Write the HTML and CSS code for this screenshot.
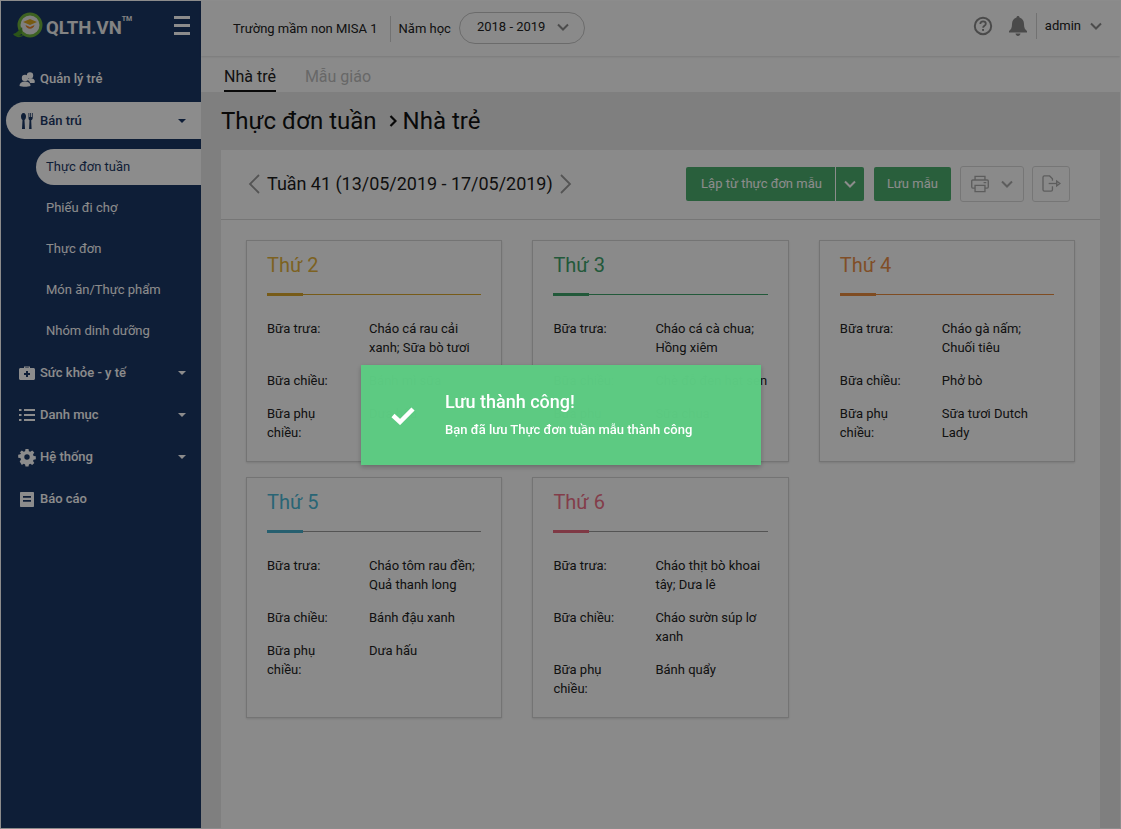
FILE: index.html
```html
<!DOCTYPE html>
<html lang="vi">
<head>
<meta charset="utf-8">
<title>Thực đơn tuần</title>
<link rel="stylesheet" href="styles.css">
</head>
<body>
<div class="app">
  <aside class="sidebar">
    <div class="brand">
      <svg class="logo" viewBox="0 0 32 28" width="32" height="28">
        <circle cx="18" cy="13" r="11" fill="#e8e8e8" stroke="#6fb23d" stroke-width="3"/>
        <path d="M11 10l7-3 7 3-7 3z" fill="#d9a520"/>
        <path d="M13.500 13c1 5 8 5 9 0l-4.500 2z" fill="#e2812c"/>
        <path d="M1 22c4-1 6-4 9-7 1 4 0 9-5 9 3 0 5-1 7-1-3 3-8 3-11-1z" fill="#4f9a2e"/>
      </svg>
      <span class="brand-name">QLTH.VN</span><span class="tm">TM</span>
      <div class="burger"><i></i><i></i><i></i></div>
    </div>
    <nav class="nav">
      <a class="nav-item">
        <svg class="nav-icon" viewBox="0 0 16 16"><circle cx="11" cy="4.500" r="3.200"/><path d="M8 9c1-2 5-2.500 6.500-1S16 10 15.500 12H11c0-1-1-2.500-3-3z"/><circle cx="6" cy="7" r="3.200"/><path d="M0.500 15c0-3 2-4.500 5.500-4.500s5.500 1.500 5.500 4.500c-3 1-8 1-11 0z"/></svg>
        <span>Quản lý trẻ</span>
      </a>
      <a class="nav-item active">
        <svg class="nav-icon" viewBox="0 0 16 16"><path d="M4.500 0c1.800 0 2.500 2 2.500 3.500S6.300 6.500 5.500 7l.5 9H3l.5-9C2.700 6.500 2 5 2 3.500S2.700 0 4.500 0z"/><path d="M9.500 0h.8v4h.9V0h.8v4h.9V0h.8v5c0 1.200-.8 2-1.500 2.300l.4 8.700h-2.500l.4-8.700C10 7 9.500 6.200 9.500 5z"/></svg>
        <span>Bán trú</span><b class="caret"></b>
      </a>
      <a class="sub-item current">Thực đơn tuần</a>
      <a class="sub-item">Phiếu đi chợ</a>
      <a class="sub-item">Thực đơn</a>
      <a class="sub-item">Món ăn/Thực phẩm</a>
      <a class="sub-item">Nhóm dinh dưỡng</a>
      <a class="nav-item">
        <svg class="nav-icon" viewBox="0 0 16 16"><path fill-rule="evenodd" d="M5 3V1.500h6V3h3.500c.8 0 1.500.7 1.500 1.500v9c0 .8-.7 1.500-1.500 1.500h-13C.7 15 0 14.300 0 13.500v-9C0 3.700.7 3 1.500 3zm1.200 0h3.600v-.6H6.200zM7 6v2H5v2h2v2h2v-2h2V8H9V6z"/></svg>
        <span>Sức khỏe - y tế</span><b class="caret"></b>
      </a>
      <a class="nav-item">
        <svg class="nav-icon" viewBox="0 0 16 16"><path d="M0 2h2.500v2H0zM5 2h11v2H5zM0 7h2.500v2H0zM5 7h11v2H5zM0 12h2.500v2H0zM5 12h11v2H5z"/></svg>
        <span>Danh mục</span><b class="caret"></b>
      </a>
      <a class="nav-item">
        <svg class="nav-icon" viewBox="0 0 16 16"><path fill-rule="evenodd" d="M6.500 0h3l.4 2.200 1.400.6L13.200 1.500l2.100 2.100-1.300 1.900.6 1.400 2.200.4v3l-2.200.4-.6 1.400 1.300 1.900-2.100 2.100-1.900-1.300-1.400.6-.4 2.200h-3l-.4-2.200-1.400-.6-1.900 1.300L.7 12.400 2 10.500l-.6-1.400L-.8 8.700v-3l2.200-.4.6-1.400L.7 3.600l2.100-2.100 1.900 1.300 1.400-.6zM8 5.300a2.700 2.700 0 1 0 0 5.400 2.700 2.700 0 0 0 0-5.400z"/></svg>
        <span>Hệ thống</span><b class="caret"></b>
      </a>
      <a class="nav-item">
        <svg class="nav-icon" viewBox="0 0 16 16"><path fill-rule="evenodd" d="M2 1h12c.6 0 1 .4 1 1v13c0 .6-.4 1-1 1H2c-.6 0-1-.4-1-1V2c0-.6.4-1 1-1zm2 4v1.800h8V5zm0 4v1.800h8V9z"/></svg>
        <span>Báo cáo</span>
      </a>
    </nav>
  </aside>

  <div class="main">
    <header class="topbar">
      <span class="school">Trường mầm non MISA 1</span>
      <span class="vline"></span>
      <span class="year-label">Năm học</span>
      <div class="year-select">
        <span>2018 - 2019</span>
        <svg class="chev" viewBox="0 0 12 8" width="12" height="8"><path d="M1 1.500l5 5 5-5" fill="none" stroke="#8a8a8a" stroke-width="2"/></svg>
      </div>
      <div class="top-right">
        <svg class="help" viewBox="0 0 20 20" width="20" height="20"><circle cx="10" cy="10" r="8.200" fill="none" stroke="#888" stroke-width="2"/><path d="M7.300 8c0-1.700 1.200-2.700 2.800-2.700s2.700 1 2.700 2.400c0 2.200-2.700 2-2.700 4.100" fill="none" stroke="#888" stroke-width="1.800"/><rect x="9.100" y="13" width="1.900" height="1.900" fill="#888"/></svg>
        <svg class="bell" viewBox="0 0 18 20" width="18" height="20"><path d="M9 0c1 0 1.500.7 1.500 1.500C13.500 2.300 15 5 15 8c0 4 1 5.500 3 7v1.500H0V15c2-1.500 3-3 3-7 0-3 1.500-5.700 4.500-6.500C7.500.7 8 0 9 0zM6.500 17.500h5C11.300 19 10.300 20 9 20s-2.300-1-2.500-2.500z" fill="#888"/></svg>
        <span class="vline tall"></span>
        <span class="user">admin</span>
        <svg class="chev" viewBox="0 0 12 8" width="12" height="8"><path d="M1 1.500l5 5 5-5" fill="none" stroke="#8a8a8a" stroke-width="2"/></svg>
      </div>
    </header>

    <div class="tabs">
      <a class="tab selected">Nhà trẻ</a>
      <a class="tab">Mẫu giáo</a>
    </div>

    <div class="content">
      <h1 class="page-title">Thực đơn tuần<svg class="crumb" viewBox="0 0 8 12" width="8" height="12"><path d="M1.500 1l5 5-5 5" fill="none" stroke="#111" stroke-width="2.200"/></svg>Nhà trẻ</h1>

      <section class="panel">
        <div class="toolbar">
          <svg class="arrow" viewBox="0 0 12 20" width="12" height="20"><path d="M11 1L2 10l9 9" fill="none" stroke="#999" stroke-width="1.800"/></svg>
          <span class="week">Tuần 41 (13/05/2019 - 17/05/2019)</span>
          <svg class="arrow" viewBox="0 0 12 20" width="12" height="20"><path d="M1 1l9 9-9 9" fill="none" stroke="#999" stroke-width="1.800"/></svg>
          <div class="actions">
            <div class="btn-group">
              <button class="btn main-btn">Lập từ thực đơn mẫu</button>
              <button class="btn drop-btn"><svg viewBox="0 0 12 8" width="12" height="8"><path d="M1 1.500l5 5 5-5" fill="none" stroke="#fff" stroke-width="2"/></svg></button>
            </div>
            <button class="btn save-btn">Lưu mẫu</button>
            <button class="ghost print">
              <svg viewBox="0 0 20 19" width="18" height="18" fill="none" stroke="#aaa" stroke-width="1.500"><path d="M4.500 5V1h11v4M4.500 14H2a1.200 1.200 0 0 1-1.200-1.200V6.200A1.200 1.200 0 0 1 2 5h16a1.200 1.200 0 0 1 1.200 1.200v6.600A1.200 1.200 0 0 1 18 14h-2.500"/><path d="M4.500 11h11v7h-11zM14 8h3"/></svg>
              <svg viewBox="0 0 12 8" width="12" height="8"><path d="M1 1.500l5 5 5-5" fill="none" stroke="#aaa" stroke-width="2"/></svg>
            </button>
            <button class="ghost export">
              <svg viewBox="0 0 20 18" width="19" height="17" fill="none" stroke="#aaa" stroke-width="1.400"><path d="M11 6V4L8 1H2.500A1.500 1.500 0 0 0 1 2.500v13A1.500 1.500 0 0 0 2.500 17H9.500A1.500 1.500 0 0 0 11 15.500V12"/><path d="M7 9h9"/><path d="M15.500 6.500L19 9l-3.500 2.500z"/></svg>
            </button>
          </div>
        </div>

        <div class="cards">
          <article class="card yellow">
            <h2>Thứ 2</h2>
            <div class="rule"><i></i></div>
            <dl>
              <dt>Bữa trưa:</dt><dd>Cháo cá rau cải xanh; Sữa bò tươi</dd>
              <dt>Bữa chiều:</dt><dd>Bánh mì sữa</dd>
              <dt>Bữa phụ chiều:</dt><dd>Dưa hấu</dd>
            </dl>
          </article>
          <article class="card green">
            <h2>Thứ 3</h2>
            <div class="rule"><i></i></div>
            <dl>
              <dt>Bữa trưa:</dt><dd>Cháo cá cà chua; Hồng xiêm</dd>
              <dt>Bữa chiều:</dt><dd class="one-line">Chè đỗ đen hạt sen</dd>
              <dt>Bữa phụ chiều:</dt><dd>Sữa chua</dd>
            </dl>
          </article>
          <article class="card orange">
            <h2>Thứ 4</h2>
            <div class="rule"><i></i></div>
            <dl>
              <dt>Bữa trưa:</dt><dd>Cháo gà nấm; Chuối tiêu</dd>
              <dt>Bữa chiều:</dt><dd>Phở bò</dd>
              <dt>Bữa phụ chiều:</dt><dd>Sữa tươi Dutch Lady</dd>
            </dl>
          </article>
          <article class="card blue">
            <h2>Thứ 5</h2>
            <div class="rule"><i></i></div>
            <dl>
              <dt>Bữa trưa:</dt><dd>Cháo tôm rau đền; Quả thanh long</dd>
              <dt>Bữa chiều:</dt><dd>Bánh đậu xanh</dd>
              <dt>Bữa phụ chiều:</dt><dd>Dưa hấu</dd>
            </dl>
          </article>
          <article class="card pink">
            <h2>Thứ 6</h2>
            <div class="rule"><i></i></div>
            <dl>
              <dt>Bữa trưa:</dt><dd>Cháo thịt bò khoai tây; Dưa lê</dd>
              <dt>Bữa chiều:</dt><dd>Cháo sườn súp lơ xanh</dd>
              <dt>Bữa phụ chiều:</dt><dd>Bánh quẩy</dd>
            </dl>
          </article>
        </div>
      </section>
    </div>
  </div>
</div>

<div class="overlay"></div>

<div class="toast">
  <svg class="toast-check" viewBox="0 0 24 19" width="24" height="19"><path d="M2 9.500l7 6.500L22 3" fill="none" stroke="#fff" stroke-width="4.500"/></svg>
  <div class="toast-text">
    <div class="toast-title">Lưu thành công!</div>
    <div class="toast-msg">Bạn đã lưu Thực đơn tuần mẫu thành công</div>
  </div>
</div>
</body>
</html>
```
FILE: styles.css
```css
* { box-sizing: border-box; }
html, body { margin: 0; height: 100%; overflow: hidden; }
body { font-family: Roboto, "Noto Sans", sans-serif; font-size: 13px; color: #212121; background: #e8e8e8; }

.app { display: flex; height: 829px; border: 1px solid #fff; overflow: hidden; }

/* Sidebar */
.sidebar { width: 200px; flex: none; background: #1b3765; color: #fff; }
.brand { display: flex; align-items: center; height: 59px; padding: 0 0 10px 11px; }
.logo { flex: none; margin-right: 2px; }
.brand-name { font-size: 18.500px; font-weight: 700; color: #eee; margin-top: 4px; }
.tm { font-size: 7px; font-weight: 700; align-self: flex-start; margin-top: 14px; color: #eee; }
.burger { margin-left: auto; margin-right: 11px; width: 16px; display: flex; flex-direction: column; gap: 5.500px; }
.burger i { display: block; height: 2.500px; background: #fff; }

.nav { display: flex; flex-direction: column; gap: 5px; }
.nav-item { display: flex; align-items: center; height: 37px; margin-left: 5px; padding: 0 15px 0 13px; font-weight: 500; color: #fff; border-radius: 19px 0 0 19px; }
.nav-item.active { background: #fff; color: #1b3765; margin-bottom: 5px; }
.nav-icon { width: 16px; height: 16px; flex: none; margin-right: 5px; fill: #fff; overflow: visible; }
.active .nav-icon { fill: #1b3765; }
.caret { margin-left: auto; width: 0; height: 0; border: 4px solid transparent; border-top-color: #fff; border-bottom: 0; }
.active .caret { border-top-color: #1b3765; }

.sub-item { display: flex; align-items: center; height: 36px; margin-left: 35px; padding: 0 0 2px 10px; color: #fff; border-radius: 18px 0 0 18px; }
.sub-item.current { background: #fff; color: #1b3765; }

/* Main */
.main { flex: 1; min-width: 0; display: flex; flex-direction: column; }
.topbar { display: flex; align-items: center; height: 55px; flex: none; padding: 0 18px 0 32px; background: #fcfcfc; box-shadow: 0 1px 2px rgba(0,0,0,.12); position: relative; }
.school { margin-right: 12px; }
.vline { width: 1px; height: 26px; background: #d0d0d0; }
.year-label { margin: 0 8px; }
.year-select { display: flex; align-items: center; justify-content: space-between; width: 126px; height: 32px; margin-bottom: 2px; padding: 0 15px 2px 17px; border: 1px solid #c4c4c4; border-radius: 16px; }
.top-right { margin-left: auto; display: flex; align-items: center; padding-bottom: 6px; }
.help { margin-right: 16px; }
.bell { margin-right: 9px; }
.vline.tall { margin-right: 8px; }
.user { margin-right: 9px; }

.tabs { display: flex; height: 36px; flex: none; padding-left: 23px; gap: 29px; background: #fcfcfc; }
.tab { font-size: 16px; line-height: 42px; height: 36px; color: #bdbdbd; }
.tab.selected { color: #212121; border-bottom: 2px solid #111; }

.content { flex: 1; min-height: 0; display: flex; flex-direction: column; padding: 0 20px; background: #e8e8e8; }
.page-title { display: flex; align-items: center; height: 58px; margin: 0; font-size: 24px; font-weight: 400; color: #111; flex: none; }
.crumb { margin: 0 6px 0 12px; }

.panel { flex: 1; background: #fcfcfc; }
.toolbar { display: flex; align-items: center; height: 70px; padding: 0 30px 2px 27px; border-bottom: 1px solid #d8d8d8; }
.arrow { flex: none; }
.week { font-size: 18px; letter-spacing: -.03px; margin: 0 7px; color: #1d1d1d; }
.actions { margin-left: auto; display: flex; align-items: center; }
.btn { height: 34px; border: 0; font: 13px Roboto, sans-serif; color: #fff; background: #4cae6e; padding: 0; }
.btn-group { display: flex; margin-right: 10px; }
.main-btn { width: 150px; border-radius: 2px 0 0 2px; border-right: 1px solid #fff; padding-left: 2px; }
.drop-btn { width: 28px; border-radius: 0 2px 2px 0; display: flex; align-items: center; justify-content: center; }
.save-btn { width: 77px; border-radius: 2px; margin-right: 9px; }
.ghost { height: 36px; background: transparent; border: 1px solid #d8d8d8; border-radius: 3px; padding: 0; display: flex; align-items: center; justify-content: center; }
.print { width: 64px; gap: 12px; margin-right: 8px; }
.export { width: 38px; }

.cards { display: grid; grid-template-columns: repeat(3, 256.400px); column-gap: 30px; row-gap: 15px; padding: 20px 0 0 25px; }
.card { background: #fcfcfc; border: 1px solid #d4d4d4; box-shadow: 0 1px 2px rgba(0,0,0,.12); padding: 10px 20px 19px; }
.card h2 { margin: 0; font-size: 20px; font-weight: 400; line-height: 28px; }
.rule { height: 1px; margin: 15px 0 24px; position: relative; }
.rule i { position: absolute; left: 0; top: -1px; width: 36px; height: 3px; }
.yellow h2 { color: #e3b23c; } .yellow .rule, .yellow .rule i { background: #d9a72c; }
.green h2 { color: #3fa36a; } .green .rule, .green .rule i { background: #3fa36a; }
.orange h2 { color: #ea8f48; } .orange .rule, .orange .rule i { background: #e88a3e; }
.blue h2 { color: #4bb8d6; } .blue .rule i { background: #45aecb; }
.pink h2 { color: #ee7088; } .pink .rule i { background: #e8697f; }
.blue .rule, .pink .rule { background: #999; }
dl { margin: 0; display: grid; grid-template-columns: 102px 1fr; row-gap: 14px; line-height: 19px; }
dt { padding-right: 40px; }
dd { margin: 0; }
.one-line { white-space: nowrap; }

/* Dim layer and notification */
.overlay { position: fixed; inset: 0; background: rgba(0,0,0,.45); }
.toast { position: fixed; left: 361px; top: 365px; width: 400px; height: 100px; display: flex; align-items: center; background: rgba(92,203,130,.985); color: #fff; box-shadow: 0 2px 5px rgba(0,0,0,.25); padding-left: 30px; }
.toast-check { flex: none; margin-right: 30px; }
.toast-text { padding-bottom: 2px; }
.toast-title { font-size: 18px; font-weight: 500; line-height: 24px; margin-bottom: 7px; }
.toast-msg { font-size: 13px; font-weight: 500; line-height: 18px; }
```
